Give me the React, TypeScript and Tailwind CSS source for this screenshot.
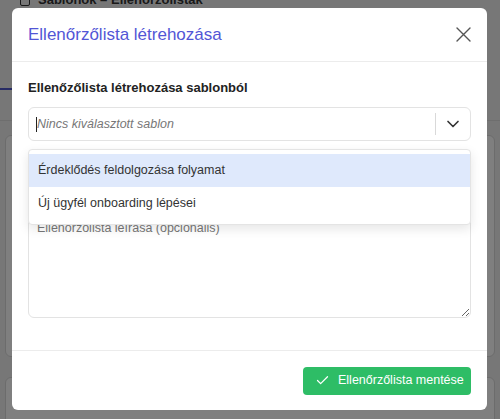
import * as React from 'react';
import { Check, ChevronDown } from 'lucide-react';

const options = ['Érdeklődés feldolgozása folyamat', 'Új ügyfél onboarding lépései'];

function BackgroundPage() {
  return (
    <div className="h-[419px] w-[500px] overflow-hidden bg-[#eeeeee]">
      {/* top toolbar, mostly hidden behind the modal */}
      <div className="flex h-[6px] items-end gap-2 px-5">
        <div className="h-[10px] w-[10px] rounded-[2px] border border-[#333]" />
        <span className="text-[13px] font-bold leading-none text-[#333]">Sablonok – Ellenőrzőlisták</span>
      </div>
      <div className="mt-[82px] flex h-[2px]">
        <div className="h-[2px] w-[60px] bg-[#4f56c9]" />
      </div>
      <div className="mt-[30px] h-px bg-[#dddddd]" />
      <div className="mx-[5px] mt-[14px] flex flex-col gap-[20px]">
        <div className="h-[222px] rounded-[6px] border border-[#d8d8d8] bg-white" />
        <div className="h-[80px] rounded-[6px] border border-[#d8d8d8] bg-white" />
      </div>
    </div>
  );
}

function SelectBox() {
  return (
    <div className="relative">
      <div className="flex h-[34px] items-center rounded-[6px] border border-[#e3e3e3] bg-white">
        <div className="flex flex-1 items-center pl-[7px]">
          <span className="h-[15px] w-px bg-[#222]" />
          <span className="text-[12.5px] italic text-[#777]">Nincs kiválasztott sablon</span>
        </div>
        <span className="h-[22px] w-px bg-[#d9d9d9]" />
        <div className="flex w-[34px] items-center justify-center text-[#333]">
          <ChevronDown size={20} strokeWidth={2} />
        </div>
      </div>

      {/* open dropdown menu */}
      <div className="absolute left-0 right-0 top-[42px] z-10 rounded-[4px] border border-[#e4e4e4] bg-white py-[4px] shadow-[0_4px_11px_rgba(0,0,0,0.1)]">
        {options.map((opt, i) => (
          <div
            key={opt}
            className={`flex h-[33px] items-center px-[9px] text-[12.5px] text-[#333] ${
              i === 0 ? 'bg-[#dfe9fc]' : 'bg-white'
            }`}
          >
            {opt}
          </div>
        ))}
      </div>
    </div>
  );
}

function Modal() {
  return (
    <div className="flex w-[475px] flex-col rounded-[6px] bg-white font-['Liberation_Sans',Arial,sans-serif]">
      {/* Header */}
      <div className="flex h-[54px] items-center justify-between border-b border-[#ececec] px-[16px]">
        <h2 className="text-[17px] font-normal text-[#5256d6]">Ellenőrzőlista létrehozása</h2>
        <button className="flex h-[16px] w-[16px] items-center justify-center text-[#555]">
          <svg width="15" height="15" viewBox="0 0 15 15" fill="none" stroke="currentColor" strokeWidth="1.4" strokeLinecap="round">
            <path d="M1 1L14 14M14 1L1 14" />
          </svg>
        </button>
      </div>

      {/* Body */}
      <div className="flex flex-col px-[16px] pb-[32px] pt-[16px]">
        <label className="mb-[9px] text-[13px] font-bold leading-[20px] text-[#222]">
          Ellenőzőlista létrehozása sablonból
        </label>
        <SelectBox />
        <input
          className="mt-[16px] h-[34px] rounded-[6px] border border-[#e3e3e3] px-[8px] text-[12.5px]"
          placeholder="Ellenőrzőlista neve"
          readOnly
        />
        <textarea
          className="mt-[16px] h-[111px] resize-y rounded-[6px] border border-[#e3e3e3] px-[8px] py-[10px] text-[12.5px] leading-[20px] text-[#333] outline-none placeholder:text-[#777]"
          placeholder="Ellenőrzőlista leírása (opcionális)"
          readOnly
        />
      </div>

      {/* Footer */}
      <div className="flex h-[60px] items-center justify-end border-t border-[#ececec] px-[16px]">
        <button className="flex h-[28px] w-[168px] items-center gap-[8px] rounded-[4px] bg-[#2ebd66] pl-[12px] text-[12.5px] text-white">
          <Check size={15} strokeWidth={2} />
          Ellenőrzőlista mentése
        </button>
      </div>
    </div>
  );
}

export default function App() {
  return (
    <div className="relative h-[419px] w-[500px] overflow-hidden font-['Liberation_Sans',Arial,sans-serif]">
      <BackgroundPage />
      <div className="absolute inset-0 flex items-start bg-black/50 pl-[12px] pt-[8px]">
        <Modal />
      </div>
    </div>
  );
}
